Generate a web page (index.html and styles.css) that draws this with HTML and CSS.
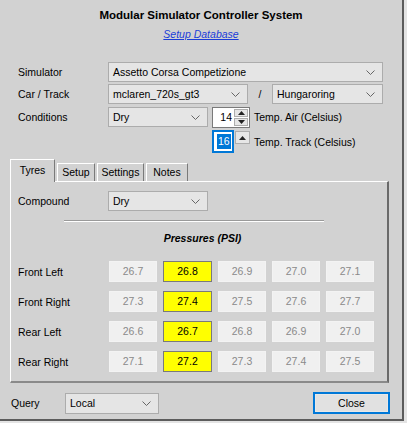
FILE: index.html
```html
<!DOCTYPE html>
<html>
<head>
<meta charset="utf-8">
<link rel="stylesheet" href="styles.css">
</head>
<body>
<div class="window">
  <header class="head">
    <h1 class="title">Modular Simulator Controller System</h1>
    <a class="link" href="#">Setup Database</a>
  </header>

  <div class="form">
    <div class="row r1">
      <span class="label">Simulator</span>
      <div class="select w-sim"><span>Assetto Corsa Competizione</span><svg class="chev" width="9" height="5" viewBox="0 0 9 5"><polyline points="0.5,0.5 4.5,4.5 8.5,0.5" fill="none" stroke="#666" stroke-width="1"/></svg></div>
    </div>
    <div class="row r2">
      <span class="label">Car / Track</span>
      <div class="select w-car"><span>mclaren_720s_gt3</span><svg class="chev" width="9" height="5" viewBox="0 0 9 5"><polyline points="0.5,0.5 4.5,4.5 8.5,0.5" fill="none" stroke="#666" stroke-width="1"/></svg></div>
      <span class="slash">/</span>
      <div class="select w-track"><span>Hungaroring</span><svg class="chev" width="9" height="5" viewBox="0 0 9 5"><polyline points="0.5,0.5 4.5,4.5 8.5,0.5" fill="none" stroke="#666" stroke-width="1"/></svg></div>
    </div>
    <div class="row r3">
      <span class="label">Conditions</span>
      <div class="select w-cond"><span>Dry</span><svg class="chev" width="9" height="5" viewBox="0 0 9 5"><polyline points="0.5,0.5 4.5,4.5 8.5,0.5" fill="none" stroke="#666" stroke-width="1"/></svg></div>
      <div class="spin">
        <div class="spin-field">14</div>
        <div class="spin-btns">
          <div class="sbtn"><svg width="7" height="4" viewBox="0 0 7 4"><polygon points="0,4 3.5,0 7,4" fill="#222"/></svg></div>
          <div class="sbtn"><svg width="7" height="4" viewBox="0 0 7 4"><polygon points="0,0 3.5,4 7,0" fill="#222"/></svg></div>
        </div>
      </div>
      <span class="temp">Temp. Air (Celsius)</span>
    </div>
    <div class="row r4">
      <div class="spin2">
        <div class="spin2-field"><span class="sel">16</span></div>
        <div class="sbtn single"><svg width="7" height="4" viewBox="0 0 7 4"><polygon points="0,4 3.5,0 7,4" fill="#222"/></svg></div>
      </div>
      <span class="temp">Temp. Track (Celsius)</span>
    </div>
  </div>

  <div class="tabs">
    <div class="tab active">Tyres</div>
    <div class="tab t-setup">Setup</div>
    <div class="tab t-settings">Settings</div>
    <div class="tab t-notes">Notes</div>
  </div>
  <div class="panel">
    <div class="row prow">
      <span class="label">Compound</span>
      <div class="select w-cond"><span>Dry</span><svg class="chev" width="9" height="5" viewBox="0 0 9 5"><polyline points="0.5,0.5 4.5,4.5 8.5,0.5" fill="none" stroke="#666" stroke-width="1"/></svg></div>
    </div>
    <div class="sep"></div>
    <div class="ptitle">Pressures (PSI)</div>
    <div class="grid">
      <div class="prow2"><span class="plabel">Front Left</span><span class="cell">26.7</span><span class="cell hl">26.8</span><span class="cell">26.9</span><span class="cell">27.0</span><span class="cell">27.1</span></div>
      <div class="prow2"><span class="plabel">Front Right</span><span class="cell">27.3</span><span class="cell hl">27.4</span><span class="cell">27.5</span><span class="cell">27.6</span><span class="cell">27.7</span></div>
      <div class="prow2"><span class="plabel">Rear Left</span><span class="cell">26.6</span><span class="cell hl">26.7</span><span class="cell">26.8</span><span class="cell">26.9</span><span class="cell">27.0</span></div>
      <div class="prow2"><span class="plabel">Rear Right</span><span class="cell">27.1</span><span class="cell hl">27.2</span><span class="cell">27.3</span><span class="cell">27.4</span><span class="cell">27.5</span></div>
    </div>
  </div>

  <footer class="foot">
    <span class="qlabel">Query</span>
    <div class="select w-query"><span>Local</span><svg class="chev" width="9" height="5" viewBox="0 0 9 5"><polyline points="0.5,0.5 4.5,4.5 8.5,0.5" fill="none" stroke="#666" stroke-width="1"/></svg></div>
    <div class="close">Close</div>
  </footer>
</div>
</body>
</html>
```

FILE: styles.css
```css
html, body {
  margin: 0;
  padding: 0;
}
body {
  width: 407px;
  height: 423px;
  background: #e4e4e4;
  font-family: "Liberation Sans", Arial, sans-serif;
  font-size: 10.5px;
  color: #000;
  overflow: hidden;
}
.window {
  width: 404px;
  height: 421px;
  box-sizing: border-box;
  background: #d2d2d2;
  border-right: 2px solid #5c5c5c;
  border-bottom: 2px solid #5c5c5c;
}
.head {
  padding-top: 8px;
  text-align: center;
}
.title {
  margin: 0;
  font-size: 11.5px;
  line-height: 14px;
  font-weight: bold;
}
.link {
  display: block;
  margin-top: 5px;
  line-height: 14px;
  font-style: italic;
  text-decoration: underline;
  color: #1a3cd8;
}
.form {
  margin-top: 21px;
  padding-left: 18px;
}
.row {
  display: flex;
  align-items: center;
  height: 20px;
}
.r2 { margin-top: 2px; }
.r3 { margin-top: 3px; }
.r4 { margin-top: 3px; height: 23px; padding-left: 194px; }
.label {
  width: 90px;
  flex: none;
}
.select {
  position: relative;
  height: 20px;
  box-sizing: border-box;
  background: #e5e5e5;
  border: 1px solid #acacac;
  display: flex;
  align-items: center;
  padding-left: 4px;
  flex: none;
}
.chev {
  position: absolute;
  right: 7px;
  top: 7px;
}
.w-sim { width: 275px; }
.w-car { width: 140px; }
.w-track { width: 111px; }
.w-cond { width: 100px; }
.w-query { width: 94px; }
.slash {
  width: 24px;
  text-align: center;
}
.spin {
  display: flex;
  margin-left: 4px;
  height: 21px;
  width: 38px;
}
.spin-field {
  width: 22px;
  box-sizing: border-box;
  background: #fff;
  border: 1px solid #7a7a7a;
  border-right: none;
  text-align: right;
  padding-right: 2px;
  line-height: 19px;
}
.spin-btns {
  width: 16px;
  display: flex;
  flex-direction: column;
  background: #fff;
  border: 1px solid #7a7a7a;
  border-left: none;
  box-sizing: border-box;
  padding: 1px 1px 1px 0;
  gap: 1px;
}
.sbtn {
  flex: 1;
  background: #e6e6e6;
  border: 1px solid #adadad;
  display: flex;
  align-items: center;
  justify-content: center;
}
.temp {
  margin-left: 4px;
}
.r4 .temp { margin-left: 4px; }
.spin2 {
  display: flex;
  width: 38px;
  height: 23px;
  align-items: flex-start;
}
.spin2-field {
  width: 23px;
  height: 23px;
  box-sizing: border-box;
  border: 2px solid #0078d7;
  background: #fff;
  display: flex;
  align-items: center;
  padding-left: 3px;
}
.sel {
  background: #0078d7;
  color: #fff;
  line-height: 15px;
  padding: 0 1px;
}
.sbtn.single {
  flex: none;
  width: 13px;
  height: 11px;
  margin-left: 1px;
  margin-top: 1px;
  background: #e6e6e6;
}
.tabs {
  display: flex;
  align-items: flex-end;
  margin-top: 6px;
  margin-left: 10px;
  height: 22px;
  gap: 2px;
  position: relative;
  z-index: 1;
}
.tab {
  height: 18px;
  box-sizing: border-box;
  border-top: 1px solid #fff;
  border-left: 1px solid #fff;
  border-right: 1px solid #7a7a7a;
  line-height: 17px;
  text-align: center;
  flex: none;
}
.tab.active {
  height: 23px;
  width: 45px;
  margin-bottom: -1px;
  background: #d2d2d2;
  line-height: 20px;
}
.t-setup { width: 38px; }
.t-settings { width: 47px; }
.t-notes { width: 42px; }
.panel {
  margin-left: 10px;
  width: 379px;
  height: 202px;
  box-sizing: border-box;
  border-top: 1px solid #fff;
  border-left: 1px solid #fff;
  border-right: 2px solid #6a6a6a;
  border-bottom: 2px solid #8a8a8a;
  padding: 8px 0 0 7px;
}
.prow { height: 21px; }
.sep {
  margin-top: 9px;
  margin-left: 46px;
  width: 260px;
  border-top: 1px solid #9a9a9a;
  border-bottom: 1px solid #fff;
}
.ptitle {
  margin-top: 9px;
  line-height: 14px;
  text-align: center;
  font-weight: bold;
  font-style: italic;
}
.grid {
  margin-top: 16px;
  display: flex;
  flex-direction: column;
  gap: 9px;
}
.prow2 {
  display: flex;
  align-items: center;
  height: 21px;
  gap: 6px;
}
.plabel {
  width: 85px;
  flex: none;
}
.cell {
  width: 48px;
  height: 21px;
  box-sizing: border-box;
  background: #f0f0f0;
  border: 1px solid #f3f3f3;
  color: #8a8a8a;
  text-align: center;
  line-height: 19px;
  flex: none;
}
.cell.hl {
  background: #ffff00;
  border: 1px solid #7a7a7a;
  color: #000;
  width: 49px;
}
.foot {
  display: flex;
  align-items: center;
  margin-top: 9px;
  padding-left: 11px;
  height: 22px;
}
.qlabel {
  width: 54px;
  flex: none;
}
.w-query { height: 21px; }
.close {
  margin-left: 154px;
  width: 77px;
  height: 22px;
  box-sizing: border-box;
  border: 2px solid #0078d7;
  background: #e1e1e1;
  box-shadow: inset 0 0 0 1px #e8e8e8;
  text-align: center;
  line-height: 18px;
}
```
